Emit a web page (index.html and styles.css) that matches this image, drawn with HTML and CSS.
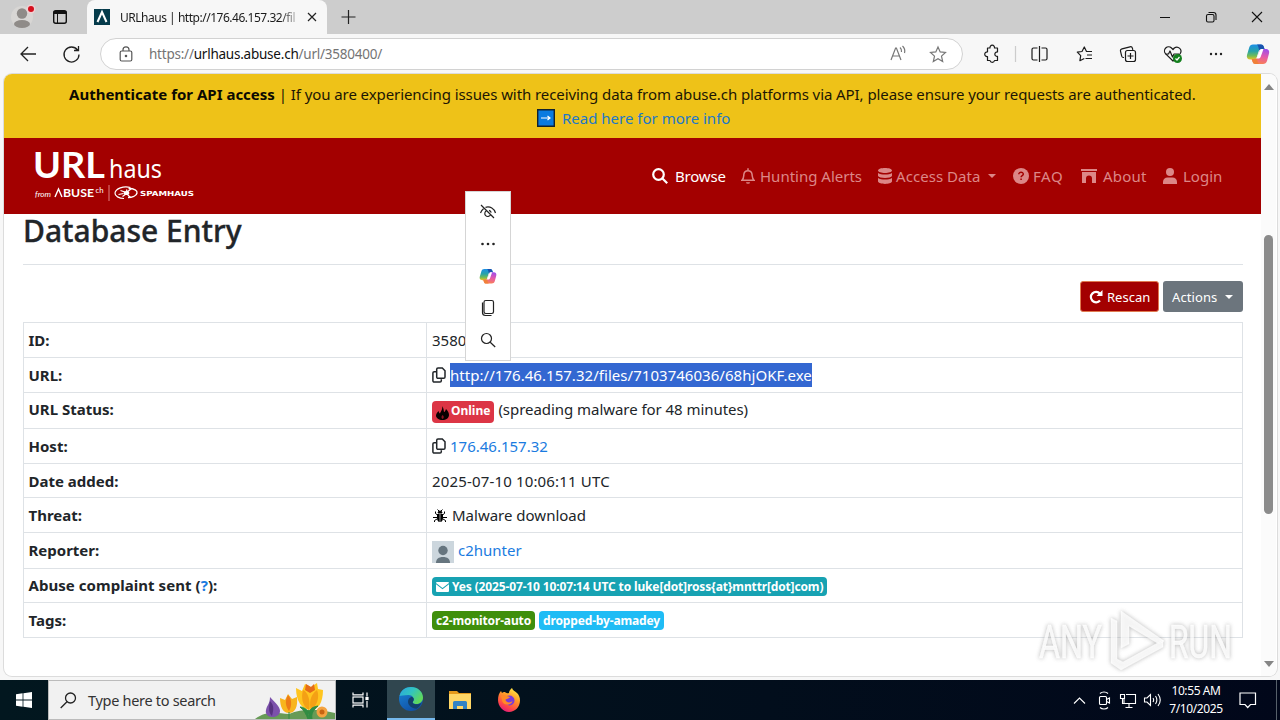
FILE: index.html
```html
<!DOCTYPE html>
<html lang="en">
<head>
<meta charset="utf-8">
<title>URLhaus</title>
<link rel="stylesheet" href="styles.css">
</head>
<body>
<svg width="0" height="0" class="defs">
  <defs>
    <linearGradient id="cpA" x1="0" y1="0" x2="0" y2="1"><stop offset="0" stop-color="#1b8fe8"/><stop offset=".45" stop-color="#28a3a8"/><stop offset=".75" stop-color="#6fbb5a"/><stop offset="1" stop-color="#e8c321"/></linearGradient>
    <linearGradient id="cpB" x1="0.6" y1="0" x2="0.4" y2="1"><stop offset="0" stop-color="#a14ee8"/><stop offset=".5" stop-color="#e65aa8"/><stop offset="1" stop-color="#fa8250"/></linearGradient>
    <linearGradient id="edA" x1="0" y1="0" x2="1" y2=".6"><stop offset="0" stop-color="#2aa5e0"/><stop offset=".5" stop-color="#32c4c0"/><stop offset="1" stop-color="#62d957"/></linearGradient>
    <linearGradient id="edB" x1="0" y1="0" x2=".6" y2="1"><stop offset="0" stop-color="#1a86d8"/><stop offset="1" stop-color="#1150a5"/></linearGradient>
    <linearGradient id="ffA" x1=".8" y1="0" x2=".3" y2="1"><stop offset="0" stop-color="#fff04a"/><stop offset=".4" stop-color="#ff9a28"/><stop offset=".75" stop-color="#ff4a45"/><stop offset="1" stop-color="#e3197c"/></linearGradient>
    <symbol id="copilot" viewBox="0 0 24 24">
      <path d="M7 2.500h8c1.500 0 2.300.8 2.700 2L18.500 7H16c-2 0-3 1-3.600 3l-1.700 5.500C10.200 17 9 17.500 7.500 17.500H4.500C1.500 17.500.3 15.500 1 13L3.200 5.500C3.800 3.500 5 2.500 7 2.500z" fill="url(#cpA)"/>
      <path d="M11 2.500h4c1.500 0 2.300.8 2.700 2L18.500 7H16c-1.400 0-2.200.4-2.800 1.300C12.500 6 12.500 4 11 2.500z" fill="#1a52ae"/>
      <path d="M17 22H9.500c-1.500 0-2.500-.8-3-2.500l-.8-2.500h2.500c2 0 3-1 3.600-3l1.700-5C14 7.500 15 7 16.500 7h3c3 0 4.200 2 3.500 4.500L21 19c-.6 2-2 3-4 3z" fill="url(#cpB)"/>
      <path d="M6.500 19.500l-.8-2.500h2.500c1.400 0 2.200-.5 2.800-1.500.7 2.500 0 4.500 2 6.500H9.500c-1.500 0-2.500-.8-3-2.500z" fill="#f0803a"/>
      <path d="M13.800 8.500c.4-1 1-1.500 2.200-1.500h1.500l-2.700 7.500c-.5 1.500-1.300 2-2.300 2H10c.7-.5 1-1.200 1.300-2z" fill="#fff"/>
    </symbol>
    <symbol id="copy" viewBox="0 0 14 16"><path d="M6 1h4.300L13 3.700V10a1.300 1.300 0 0 1-1.300 1.300H6A1.300 1.300 0 0 1 4.700 10V2.300A1.300 1.300 0 0 1 6 1zM4.300 4.700H2.200A1.300 1.300 0 0 0 .9 6v7.700A1.300 1.300 0 0 0 2.200 15H8a1.300 1.300 0 0 0 1.300-1.300v-1.500" fill="none" stroke="#212529" stroke-width="1.500"/></symbol>
  </defs>
</svg>

<header class="tabbar">
  <svg class="profile" width="80" height="34" viewBox="0 0 80 34">
    <circle cx="22" cy="17" r="11" fill="#d8d6d4"/>
    <circle cx="22" cy="13.500" r="5.200" fill="#8f8b88"/><ellipse cx="22" cy="24" rx="8" ry="4" fill="#8f8b88"/>
    <circle cx="31" cy="9" r="4.500" fill="#efd0d2"/><circle cx="31" cy="9" r="3" fill="#d5101e"/>
    <rect x="53.700" y="10.700" width="12.600" height="12.600" rx="2" fill="none" stroke="#111" stroke-width="1.400"/><path d="M54 11.500h12v2H54zM57.500 14v9" fill="#111" stroke="#111"/>
  </svg>
  <div class="tab">
    <svg width="16" height="16" viewBox="0 0 16 16"><path d="M0 0h16v16H0z" fill="#053b4b"/><path d="M3.500 13 8 3l4.500 10" fill="none" stroke="#fff" stroke-width="2"/></svg>
    <span class="tab-title">URLhaus | http://176.46.157.32/fil</span>
    <svg class="tab-x" width="10" height="10" viewBox="0 0 10 10"><path d="m1 1 8 8M9 1 1 9" stroke="#222" stroke-width="1.200"/></svg>
  </div>
  <svg class="newtab" width="16" height="16" viewBox="0 0 16 16"><path d="M7.500 1v14M.5 8h14" stroke="#222" stroke-width="1.200"/></svg>
  <svg class="winctl" width="120" height="34" viewBox="0 0 120 34" fill="none" stroke="#111" stroke-width="1.100">
    <path d="M0 17.500h10M92 12l10 10M102 12 92 22"/><rect x="46.500" y="14.500" width="7.500" height="7.500" rx="1.500"/><path d="M48.500 12.500h5a2.500 2.500 0 0 1 2.500 2.500v5"/>
  </svg>
</header>

<div class="toolbar">
  <svg class="navbtns" width="64" height="40" viewBox="0 0 64 40" fill="none" stroke="#222" stroke-width="1.300"><path d="M16 20H1M8 13l-7 7 7 7M57.500 16A7.500 7.500 0 1 0 59 20.500M58.500 12v4.500H54"/></svg>
  <div class="address">
    <svg width="14" height="16" viewBox="0 0 14 16" fill="none" stroke="#555" stroke-width="1.200"><rect x="1.200" y="5" width="11.600" height="10" rx="1.500"/><path d="M4 5V3.800a3 3 0 0 1 6 0V5"/><circle cx="7" cy="10" r=".7" fill="#555"/></svg>
    <span class="url">https://<b>urlhaus.abuse.ch</b>/url/3580400/</span>
    <svg class="addr-icons" width="58" height="20" viewBox="0 0 58 20" fill="none" stroke="#777" stroke-width="1.200"><path d="M1 16 5.600 4h.8L11 16M2.700 12h6.600M10 3.500a5 5 0 0 1 1.500 4.500M12.500 2a7 7 0 0 1 2 7"/><path d="m48 3 2.200 4.900 5.300.6-4 3.600 1.200 5.400L48 14.800l-4.700 2.700 1.200-5.400-4-3.600 5.300-.6z"/></svg>
  </div>
  <svg class="toolicons" width="302" height="40" viewBox="978 34 302 40" fill="none" stroke="#1b1b1b" stroke-width="1.200" stroke-linejoin="round">
    <path d="M987.500 48h2.500a2.300 2.300 0 1 1 4.500 0h3v4a2.200 2.200 0 1 0 0 4.300V60.500h-3a2.300 2.300 0 0 1-4.500 0h-2.500v-4a2.300 2.300 0 1 1 0-4.500z"/>
    <path d="M1015.500 46v16" stroke="#ccc"/>
    <path d="M1037.500 48h-4a1.500 1.500 0 0 0-1.500 1.500v9a1.500 1.500 0 0 0 1.500 1.500h4M1041.500 48h4a1.500 1.500 0 0 1 1.500 1.500v9a1.500 1.500 0 0 1-1.500 1.500h-4M1039.500 46v16"/>
    <path d="M1090 51.500h-3.500l-2.200-4.500-2.300 4.500-4.700.7 3.400 3.500-.8 5 4.400-2.200M1086.500 51.500h5.500M1087 55h5M1085.500 58.500h6.500" />
    <path d="M1124 57.500h-.6a1.800 1.800 0 0 1-1.700-1.300l-1.200-5a2 2 0 0 1 1.500-2.400l8-2a2 2 0 0 1 2.400 1.400l.4 1.600"/><rect x="1125.500" y="50.500" width="10" height="11" rx="2"/><path d="M1130.500 53v6M1127.500 56h6"/>
    <path d="m1173 49.500-1.500-1.500a4.100 4.100 0 0 0-5.800 5.800l7.300 7.200 7-7.200a4.100 4.100 0 0 0-5.700-5.800zM1165 54h3.500l1.500-3 2.500 6 1.500-3h5"/><circle cx="1177.500" cy="58.500" r="4.500" fill="#14801e" stroke="none"/><path d="m1175.500 58.500 1.500 1.500 2.500-3" stroke="#fff"/>
    <g fill="#222" stroke="none"><circle cx="1211" cy="54" r="1.200"/><circle cx="1216" cy="54" r="1.200"/><circle cx="1221" cy="54" r="1.200"/></g>
    <use href="#copilot" x="1246" y="42" width="24" height="24" stroke="none"/>
  </svg>
</div>

<main class="frame">
  <div class="page">
    <div class="banner">
      <div class="bl1"><b>Authenticate for API access</b><span> | If you are experiencing issues with receiving data from abuse.ch platforms via API, please ensure your requests are authenticated.</span></div>
      <div class="bl2"><svg width="18" height="18" viewBox="0 0 18 18"><path d="M.7.700h16.600v16.600H.7z" fill="#0a7be0" stroke="#10222e" stroke-width="1.400"/><path d="M4 9h9M10.500 7l2.500 2-2.500 2" stroke="#fff" fill="none" stroke-width="1.200"/></svg><span>Read here for more info</span></div>
    </div>
    <nav class="nav">
      <svg class="logo" width="200" height="76" viewBox="4 138 200 76" fill="#fff">
        <text x="33" y="178" font-family="Lato" font-weight="700" font-size="37" textLength="72" lengthAdjust="spacingAndGlyphs">URL</text>
        <text x="109" y="178" font-family="Noto Sans" font-size="26" textLength="53" lengthAdjust="spacingAndGlyphs">haus</text>
        <text x="35" y="197" font-family="Lato" font-style="italic" font-size="8.500" textLength="16" lengthAdjust="spacingAndGlyphs">from</text>
        <path d="m55 197 3.500-8 3.500 8" fill="none" stroke="#fff" stroke-width="1.400"/>
        <text x="63" y="197" font-family="Lato" font-weight="700" font-size="10.500" textLength="31" lengthAdjust="spacingAndGlyphs">BUSE</text>
        <text x="95.500" y="192.500" font-family="Lato" font-size="7.500" textLength="8" lengthAdjust="spacingAndGlyphs">ch</text>
        <path d="M109 185v16" stroke="#e08080"/>
        <g transform="translate(3.500 -.5)"><g fill="none" stroke="#fff"><path d="M127 188c-7-2-15 1-15.500 5.500-.3 3 4 5.500 9 5.500" stroke-width="1.200"/><path d="M125 189c6 0 9 2 8.500 4.500-.6 3-5 4.500-9 4.500" stroke-width="1.400"/><path d="m117 191 6 2 5-4M119 197l4-3 4 4M115 195l5-1M123 190l1 4" stroke-width="1.200"/></g><ellipse cx="123" cy="193.500" rx="2.800" ry="2"/></g>
        <text x="140" y="195.500" font-family="DejaVu Sans" font-weight="700" font-size="7" textLength="54" lengthAdjust="spacingAndGlyphs">SPAMHAUS</text>
      </svg>
      <ul class="menu">
        <li class="on n1"><svg width="16" height="16" viewBox="0 0 16 16" fill="none" stroke="currentColor" stroke-width="2.200"><circle cx="6.500" cy="6.500" r="5.300"/><path d="m10.500 10.500 4.700 4.700"/></svg><span>Browse</span></li>
        <li class="n2"><svg width="14" height="16" viewBox="0 0 14 16" fill="none" stroke="currentColor" stroke-width="1.500"><path d="M7 .3V2M1 12.200c2-2.200 1.600-3.700 1.900-6A4.100 4.100 0 0 1 11 6.200c.4 2.300 0 3.800 2 6z"/><path d="M5 14.300a2 1.500 0 0 0 4 0z" fill="currentColor" stroke="none"/></svg><span>Hunting Alerts</span></li>
        <li class="n3"><svg width="14" height="16" viewBox="0 0 14 16" fill="currentColor"><path d="M0 2.500C0-.8 14-.8 14 2.500S0 5.800 0 2.500zM0 5c3 2 11 2 14 0v3c-1 2.600-13 2.600-14 0zM0 10c3 2 11 2 14 0v3.500c-1 3.200-13 3.200-14 0z"/></svg><span>Access Data</span><i class="caret"></i></li>
        <li class="n4"><svg width="16" height="16" viewBox="0 0 16 16"><circle cx="8" cy="8" r="8" fill="currentColor"/><path d="M5.800 6.200C5.800 3.600 10.400 3.700 10.300 6.200c0 1.500-2.200 1.400-2.200 3M8.100 10.500v1.600" fill="none" stroke="#a30000" stroke-width="1.500"/></svg><span>FAQ</span></li>
        <li class="n5"><svg width="16" height="14" viewBox="0 0 16 14" fill="currentColor"><path d="M0 0h16v2H0zM1 3h14v11h-4V9.500a3 3 0 0 0-6 0V14H1z"/></svg><span>About</span></li>
        <li class="n6"><svg width="14" height="16" viewBox="0 0 14 16" fill="currentColor"><circle cx="7" cy="4" r="4"/><path d="M0 16v-2c0-3 2-4.500 4.500-4.500h5C12 9.500 14 11 14 14v2z"/></svg><span>Login</span></li>
      </ul>
    </nav>
    <section class="content">
      <h1><span>Database Entry</span></h1>
      <div class="actions">
        <button class="btn rescan"><svg width="14" height="14" viewBox="0 0 14 14"><path d="M11 10.500A5.200 5.200 0 1 1 11 3.700" fill="none" stroke="#fff" stroke-width="2.200"/><path d="M13.500 0v6H7.500z" fill="#fff"/></svg><span>Rescan</span></button>
        <button class="btn more"><span>Actions</span><i class="caret"></i></button>
      </div>
      <div class="table">
        <div class="row r35"><b class="k">ID:</b><div class="v"><span>3580400</span></div></div>
        <div class="row r35"><b class="k">URL:</b><div class="v"><svg class="cp" width="14" height="16"><use href="#copy"/></svg><span class="sel">http://176.46.157.32/files/7103746036/68hjOKF.exe</span></div></div>
        <div class="row r36 status"><b class="k">URL Status:</b><div class="v"><span class="badge red"><svg width="13" height="14" viewBox="0 0 13 14"><path d="M6 0c2 2.500 1.500 4 2 6 1-.2 1.500-1.500 2-3C12 5 13 7 13 9c0 3-3 5-6.500 5S0 12 0 9.500c0-2 1.500-3 2.500-4.500.5 1 .5 2 1.500 2.500C5 5 7 3 6 0z" fill="#080000"/><path d="M6.600 9c1.500 1.300 1.600 3 0 4-1.600-1-1.500-2.500 0-4z" fill="#8c1420"/></svg><span>Online</span></span><span class="spread">(spreading malware for 48 minutes)</span></div></div>
        <div class="row r35"><b class="k">Host:</b><div class="v"><svg class="cp" width="14" height="16"><use href="#copy"/></svg><span class="link host">176.46.157.32</span></div></div>
        <div class="row r34"><b class="k">Date added:</b><div class="v"><span class="date">2025-07-10 10:06:11 UTC</span></div></div>
        <div class="row r35"><b class="k">Threat:</b><div class="v"><svg class="bug" width="14" height="14" viewBox="0 0 14 14" stroke="#000" fill="#000"><path d="M5 4a2 2 0 0 1 4 0z"/><path d="M4 5H6.700v8C5 13 4 11 4 9zM10 5H7.300v8c1.700 0 2.700-2 2.700-4z" stroke="none"/><path d="M2.500 2.500v2L4.500 6M11.500 2.500v2L9.500 6M0 8.500h4M10 8.500h4M1.500 13v-1.500L4 10M12.500 13v-1.500L10 10M4.500.500 6 2M9.500.500 8 2" fill="none"/></svg><span class="mal">Malware download</span></div></div>
        <div class="row r36"><b class="k">Reporter:</b><div class="v"><svg class="ava" width="22" height="22" viewBox="0 0 22 22"><path d="M0 0h22v22H0z" fill="#ccd6dd"/><circle cx="11" cy="9.500" r="4.700" fill="#66757f"/><path d="M4 22c0-4 2.500-6 7-6s7 2 7 6z" fill="#66757f"/></svg><span class="link c2">c2hunter</span></div></div>
        <div class="row r34"><b class="k k8">Abuse complaint sent (<span class="link">?</span>):</b><div class="v"><span class="badge teal"><svg width="13" height="10" viewBox="0 0 13 10" fill="#fff"><path d="M0 1a1 1 0 0 1 1-1h11a1 1 0 0 1 1 1L6.500 6z"/><path d="M0 2.300 6.500 7.300 13 2.300V9a1 1 0 0 1-1 1H1a1 1 0 0 1-1-1z"/></svg><span>Yes (2025-07-10 10:07:14 UTC to luke[dot]ross{at}mnttr[dot]com)</span></span></div></div>
        <div class="row r35"><b class="k">Tags:</b><div class="v"><span class="badge green"><span>c2-monitor-auto</span></span><span class="badge sky"><span>dropped-by-amadey</span></span></div></div>
      </div>
    </section>
  </div>
  <div class="scroll"><i class="up"></i><i class="thumb"></i><i class="down"></i></div>
</main>

<div class="popup">
  <svg width="46" height="170" viewBox="465 191 46 170" fill="none" stroke="#222" stroke-width="1.200">
    <path d="m481 205 13 13M480.500 213c.7-2 1.700-3.300 3-4.300M485.500 207.300c4.500-1.300 9 1.200 10 5.700M486.500 210.800a3 3 0 1 0 4 4M489 210.300a3 3 0 0 1 2.200 2.300"/>
    <g fill="#222" stroke="none"><circle cx="482.500" cy="244" r="1.300"/><circle cx="488" cy="244" r="1.300"/><circle cx="493.500" cy="244" r="1.300"/></g>
    <use href="#copilot" x="479" y="267" width="18" height="18" stroke="none"/>
    <rect x="484" y="300.500" width="9.500" height="13" rx="1.700"/><path d="M482.500 302.500v10a3 3 0 0 0 3 3h6"/>
    <circle cx="486.500" cy="338.500" r="5"/><path d="m490.200 342.200 5 4.800"/>
  </svg>
</div>

<div class="mark">
  <svg width="210" height="76" viewBox="1030 602 210 76">
    <g fill="#fff" fill-opacity=".85" stroke="#fff" stroke-width=".5" font-family="Roboto" font-size="46">
      <text x="1039" y="658" textLength="63" lengthAdjust="spacingAndGlyphs">ANY</text>
      <text x="1169" y="658" textLength="63" lengthAdjust="spacingAndGlyphs">RUN</text>
      <path d="M1121 611v37l8-4v-18l30 18 5-3zM1111 618v45l10 7 42-23v-7l-40 22-6-3v-38z"/>
    </g>
  </svg>
</div>

<footer class="taskbar">
  <div class="start"><svg width="16" height="16" viewBox="0 0 16 16" fill="#fff"><path d="M0 2.200 6.600 1.300v6.300H0zM7.400 1.200 16 0v7.600H7.400zM0 8.400h6.600v6.300L0 13.800zM7.400 8.400H16V16l-8.600-1.200z"/></svg></div>
  <div class="search">
    <svg width="17" height="17" viewBox="0 0 17 17" fill="none" stroke="#222" stroke-width="1.300"><circle cx="10.500" cy="6" r="5"/><path d="m7 9.700-6.300 6.300"/></svg>
    <span>Type here to search</span>
    <svg class="flowers" width="82" height="38" viewBox="254 681 82 38">
      <path d="M256 719c12-9 22-6 34-5 14-6 30-5 46-1v6z" fill="#679b56"/>
      <path d="M271 697c4 5 10 9 10 14 0 4-4 6-8 6s-7-3-6-7c1-5 4-6 4-13z" fill="#7c51ab"/><path d="M271 701c5 5 3 10 2 15-4-4-3-9-2-15z" fill="#573180"/>
      <path d="m281 698 5 2 3-6 4 5 5-2c1 10-2 16-8 16s-9-6-9-15z" fill="#f8b51c"/><path d="M289 695c4 4 4 11 1 16-4-5-4-11-1-16z" fill="#ed7b16"/>
      <path d="m297 688 6 3 3-7 6 3 6-4 1 6 5 1c0 13-5 20-12 20-9 0-15-9-15-22z" fill="#ffc51f"/><path d="M304 690c5 2 8 11 6 20-7-4-8-13-6-20zM318 690c-7 5-8 13-6 20 6-4 9-13 6-20z" fill="#f4a015"/><path d="m307 684 5 3 3-3 1 6-5 3-5-3z" fill="#e56b18"/>
      <path d="M309 710c1 3 1 6 0 9h4c-1-5 1-9 6-13-6 1-8 3-9 7-2-4-6-6-9-6 4 3 6 7 8 12M290 712v7" fill="#318c42" stroke="#318c42" stroke-width="1"/>
      <circle cx="323" cy="712" r="5.500" fill="#f4a340"/><circle cx="323" cy="712" r="2.500" fill="#c66412"/>
    </svg>
  </div>
  <div class="app"><svg width="17" height="16" viewBox="0 0 17 16" fill="none" stroke="#fff" stroke-width="1.200"><path d="M1 .5v2.300h10V.5M1 15.500v-2.300h10v2.300M15 .5v4M15 9v6.500"/><rect x="1" y="5" width="10" height="6"/><rect x="14" y="5.500" width="2" height="2" fill="#fff"/></svg></div>
  <div class="app active"><svg width="24" height="24" viewBox="0 0 24 24"><circle cx="12" cy="12" r="12" fill="url(#edB)"/><path d="M.5 9C2 3 6.500 0 12 0c7 0 12 5 12 10.500 0 4-3 6.500-6.500 6.500-3 0-4.500-1-3.500-2.500 2-3-.5-6.500-4.500-6.500C5 8 1.500 9 .5 9z" fill="url(#edA)"/><path d="M14 14.500c-1 1.500.5 2.700 3.500 2.700 2 0 3.500-.5 5-1.500-1 2.500-3 5-5 6-5-.5-8.500-3.500-8.500-7 0-2.500 1.500-4.500 4-5 2 1 2.500 3 1 4.800z" fill="#133f6b"/></svg></div>
  <div class="app"><svg width="22" height="20" viewBox="0 0 22 20"><path d="M0 1h8l2 2h12v4H0z" fill="#e59a1b"/><path d="M0 4h22v15H0z" fill="#ffd766"/><path d="M4 12.500A1.500 1.500 0 0 1 5.500 11h11a1.500 1.500 0 0 1 1.500 1.500V19h-4v-3H8v3H4z" fill="#3183c4"/></svg></div>
  <div class="app"><svg width="24" height="24" viewBox="0 0 24 24"><path d="M1 12C1 8 2 5 4 3l1 2c1-1 2-1.300 3-1 1 1 1.500 1.500 4 1 0-2 1.500-4 3-5 .5 2.500 3 3 5 5 2 2 3 4.500 3 7.500C23 19 18 24 12 24S1 18 1 12z" fill="url(#ffA)"/><circle cx="12.500" cy="12.500" r="5" fill="#7a3bd9"/><path d="M4 8c3-2 6 0 9 1-1 2-4 1.500-4.500 3 1 3 5 3 7 1-1 5-10 5-10.500-1" fill="#ff8a26"/></svg></div>
  <svg class="tray" width="90" height="40" viewBox="1071 680 90 40" fill="none" stroke="#fff" stroke-width="1.100">
    <path d="m1073 703.500 5.500-5.500 5.500 5.500"/>
    <rect x="1098.500" y="696.500" width="7" height="8" rx="1"/><path d="m1105.500 699.500 3-1.500v5l-3-1.500M1099 693.500c2-2 6-2 8 0M1099 707.500c2 2 6 2 8 0"/>
    <path d="M1125 694.500h9.500v9H1123V699M1128 704v3.500M1124.500 707.500h7"/><path d="M1119.500 694.500h4v4h-4zM1121.500 698.500v5h2"/>
    <path d="M1143.500 698h2.500l3.500-3.500v11L1146 702h-2.500zM1152 698c1 1.500 1 2.500 0 4M1154.500 696c2 3 2 5 0 8M1157 694c3 4 3 8 0 12"/>
  </svg>
  <div class="clock"><span>10:55 AM</span><span class="d">7/10/2025</span></div>
  <svg class="note" width="18" height="17" viewBox="0 0 18 17" fill="none" stroke="#fff" stroke-width="1.200"><path d="M1 1h15.500v11.500H11.500L8.700 15.500 6 12.500H1z"/></svg>
  <i class="peek"></i>
</footer>
</body>
</html>
```

FILE: styles.css
```css
* { box-sizing: border-box; }
body { margin: 0; width: 1280px; height: 720px; overflow: hidden; display: flex; flex-direction: column; background: #f7f7f7; font-family: "Noto Sans", "Open Sans", sans-serif; font-size: 15px; color: #212529; white-space: nowrap; }
svg { display: block; flex: none; }
.defs { position: absolute; }
i { font-style: normal; }

.tabbar { height: 34px; background: #cdcdcd; display: flex; align-items: center; flex: none; }
.profile { margin-right: 7px; }
.tab { width: 240px; height: 34px; background: #f7f7f7; border-radius: 8px 8px 0 0; display: flex; align-items: center; padding-left: 7px; }
.tab-title { width: 177px; margin-left: 10px; font-size: 12px; letter-spacing: -0.48px; color: #1b1b1b; -webkit-mask-image: linear-gradient(90deg, #000 160px, transparent 182px); mask-image: linear-gradient(90deg, #000 160px, transparent 182px); }
.tab-x { margin-left: 10px; }
.newtab { margin-left: 14px; }
.winctl { margin-left: auto; }

.toolbar { height: 40px; display: flex; align-items: center; flex: none; padding-left: 20px; }
.navbtns { margin-right: 16px; }
.address { width: 863px; height: 32px; border: 1px solid #d2d2d2; border-radius: 16px; background: #fff; display: flex; align-items: center; padding: 0 14px 0 18px; }
.url { margin-left: 16px; font-size: 13.500px; letter-spacing: -0.23px; color: #747474; }
.url b { font-weight: 400; color: #111; }
.addr-icons { margin-left: auto; }
.toolicons { margin-left: 15px; }

.frame { margin-left: 4px; width: 1273px; height: 602px; flex: none; display: flex; background: #fff; border-radius: 8px; overflow: hidden; box-shadow: 0 0 0 1px #dcdcdc; }
.page { width: 1257px; }
.scroll { width: 15px; background: #fbfbfb; display: flex; flex-direction: column; align-items: center; }
.up, .down { border: 5px solid transparent; border-bottom: 6px solid #858585; border-top: 0; margin-top: 10px; }
.thumb { width: 9px; height: 279px; margin-top: 145px; border-radius: 5px; background: #8b8b8b; }
.down { border-bottom: 0; border-top: 6px solid #858585; margin-top: 147px; }

.banner { height: 64px; background: #eec218; padding-top: 8px; color: #1c1604; line-height: 24px; }
.bl1 { padding-left: 65px; }
.bl1 b { color: #0c0a02; }
.bl1 span { white-space: pre; letter-spacing: -0.077px; }
.bl2 { display: flex; align-items: center; padding-left: 533px; color: #1d78c8; gap: 7px; }
.nav { height: 76px; background: #a30000; display: flex; justify-content: space-between; align-items: center; }
.menu { margin: 0 39px 0 0; padding: 0; list-style: none; display: flex; color: #dc8787; }
.menu li { display: flex; align-items: center; }
.menu .on { color: #fff; }
.n1 { width: 89px; gap: 7px; letter-spacing: -0.2px; } .n2 { width: 137px; gap: 5px; } .n3 { width: 135px; gap: 4px; letter-spacing: 0.05px; }
.n4 { width: 68px; gap: 4px; letter-spacing: 0.6px; } .n5 { width: 82px; gap: 6px; letter-spacing: 0.2px; } .n6 { width: 59px; gap: 6px; }
.caret { border: 4px solid transparent; border-top-color: currentColor; border-bottom: 0; margin-left: 4px; }

.content { padding: 0 18px 0 19px; }
h1 { margin: 0; height: 51px; font-size: 30px; line-height: 34px; font-weight: 500; border-bottom: 1px solid #dee2e6; -webkit-text-stroke: 0.35px #212529; }
.actions { display: flex; justify-content: flex-end; gap: 4px; padding-top: 16px; height: 57px; }
.btn { height: 31px; border: 0; border-radius: 3px; color: #fff; font: 13px "Noto Sans", sans-serif; display: flex; align-items: center; padding: 0 9px; }
.rescan { width: 79px; background: #a30000; border: 1px solid #e07a50; gap: 4px; padding: 0 8px; }
.more { width: 80px; background: #6c757d; gap: 4px; letter-spacing: 0.1px; }
.table { border: 1px solid #dee2e6; border-top: 0; }
.row { display: grid; grid-template-columns: 403px 1fr; border-top: 1px solid #dee2e6; line-height: 24px; }
.r34 { height: 34px; } .r35 { height: 35px; } .r36 { height: 36px; }
.row:last-child { height: 35px; }
.k { padding: 5px 0 0 4.500px; border-right: 1px solid #dee2e6; }
.v { padding: 5px 0 0 5px; display: flex; align-items: flex-start; height: 34px; }
.status .k { padding-top: 4px; }
.spread { margin-top: -1px; letter-spacing: -0.05px; }
.k8 { padding-top: 4px; letter-spacing: 0.05px; }
.cp { margin: 4px 4px 0 0; }
.sel { background: #3367d1; color: #fff; height: 24px; letter-spacing: 0.04px; }
.date { letter-spacing: 0.16px; }
.link { color: #1a7be0; }
.badge { height: 19px; border-radius: 4px; color: #fff; font-size: 12px; line-height: 18px; font-weight: 700; display: flex; align-items: center; padding: 0 4px; margin: 3px 4px 0 0; letter-spacing: -0.14px; }
.red { background: #dc3545; height: 22px; gap: 2px; letter-spacing: 0; }
.red span { margin-top: -2px; }
.red svg { margin-top: 2px; }
.teal { background: #17a2b2; gap: 3px; }
.green { background: #3f8f0c; }
.sky { background: #1fbcf5; }
.bug { margin: 6px 5px 0 1px; }
.ava { margin: 3px 4px 0 0; }

.popup { position: absolute; left: 465px; top: 191px; width: 46px; height: 170px; background: #fff; box-shadow: 0 0 0 1px #d5d5d5 inset; }
.mark { position: absolute; left: 1030px; top: 602px; filter: drop-shadow(0 0 2px #999); opacity: .8; }

.taskbar { position: absolute; left: 0; top: 680px; width: 1280px; height: 40px; background: linear-gradient(90deg, #02171f, #020e1c 60%, #01071a); display: flex; align-items: center; color: #fff; }
.start { width: 48px; padding-left: 16px; }
.search { width: 288px; height: 40px; background: #f1f1f1; border: 1px solid #bbb; display: flex; align-items: center; padding-left: 11px; color: #333; font-size: 14.500px; letter-spacing: -0.3px; }
.search span { margin-left: 11px; }
.flowers { margin-left: auto; }
.app { width: 48px; height: 40px; display: flex; align-items: center; justify-content: center; margin-right: 1px; }
.app:nth-child(3) { margin-right: 3px; }
.active { background: #30464f; border-bottom: 2px solid #76b9ed; }
.tray { margin-left: auto; }
.clock { width: 62px; margin-left: 3px; text-align: center; font-size: 12px; line-height: 18px; letter-spacing: -0.4px; display: flex; flex-direction: column; }
.note { margin-left: 12px; }
.peek { width: 1px; height: 40px; background: #56606a; margin: 0 3px 0 19px; }
```
